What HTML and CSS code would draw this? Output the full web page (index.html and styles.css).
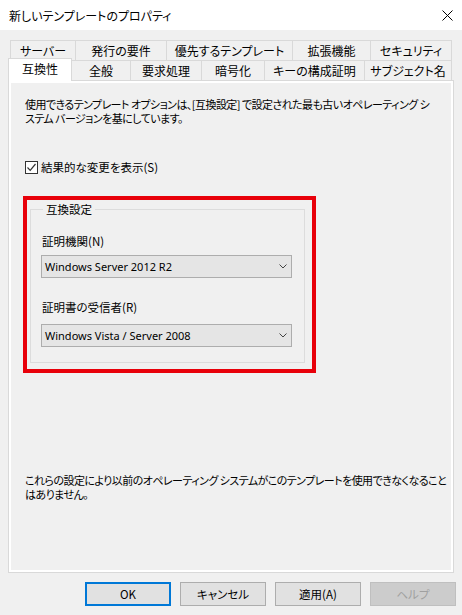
FILE: index.html
```html
<!DOCTYPE html>
<html lang="ja">
<head>
    <meta charset="UTF-8">
    <meta name="viewport" content="width=device-width, initial-scale=1.0">
    <title>新しいテンプレートのプロパティ</title>
    <link rel="stylesheet" href="styles.css">
</head>
<body>
    <div class="titlebar">
        <span class="title">新しいテンプレートのプロパティ</span>
        <svg class="close" width="11" height="11" viewBox="0 0 11 11">
            <path d="M0.5 0.5 L10.5 10.5 M10.5 0.5 L0.5 10.5" />
        </svg>
    </div>

    <div class="tabs">
        <div class="tab-row top">
            <div class="tab">サーバー</div>
            <div class="tab">発行の要件</div>
            <div class="tab">優先するテンプレート</div>
            <div class="tab">拡張機能</div>
            <div class="tab">セキュリティ</div>
        </div>
        <div class="tab-row bottom">
            <div class="tab selected">互換性</div>
            <div class="tab">全般</div>
            <div class="tab">要求処理</div>
            <div class="tab">暗号化</div>
            <div class="tab">キーの構成証明</div>
            <div class="tab">サブジェクト名</div>
        </div>
    </div>

    <div class="panel">
        <div class="page">
            <p class="intro">使用できるテンプレート オプションは、[互換設定] で設定された最も古いオペレーティング シ<br>ステム バージョンを基にしています。</p>

            <label class="check">
                <span class="box">
                    <svg width="11" height="11" viewBox="0 0 11 11">
                        <path d="M1.5 5.5 L4.2 8.3 L9.5 2" />
                    </svg>
                </span>
                結果的な変更を表示(S)
            </label>

            <!-- 赤枠は注釈 -->
            <div class="highlight">
                <fieldset class="group">
                    <legend>互換設定</legend>
                    <div class="field-label">証明機関(N)</div>
                    <div class="combo">
                        <span>Windows Server 2012 R2</span>
                        <svg width="8" height="5" viewBox="0 0 8 5"><path d="M0.5 0.5 L4 4 L7.5 0.5" /></svg>
                    </div>
                    <div class="field-label second">証明書の受信者(R)</div>
                    <div class="combo">
                        <span>Windows Vista / Server 2008</span>
                        <svg width="8" height="5" viewBox="0 0 8 5"><path d="M0.5 0.5 L4 4 L7.5 0.5" /></svg>
                    </div>
                </fieldset>
            </div>

            <p class="note">これらの設定により以前のオペレーティング システムがこのテンプレートを使用できなくなること<br>はありません。</p>
        </div>
    </div>

    <div class="buttons">
        <button class="btn default">OK</button>
        <button class="btn">キャンセル</button>
        <button class="btn">適用(A)</button>
        <button class="btn" disabled>ヘルプ</button>
    </div>
</body>
</html>
```

FILE: styles.css
```css
body {
    margin: 0;
    width: 462px;
    height: 615px;
    background-color: #f0f0f0;
    color: #000;
    font-family: "Noto Sans CJK JP", sans-serif;
    font-size: 11.5px;
    font-feature-settings: "palt";
    overflow: hidden;
}

/* タイトルバー */
.titlebar {
    height: 30px;
    background-color: #fff;
    display: flex;
    align-items: center;
    justify-content: space-between;
    padding: 0 9px;
    box-sizing: border-box;
    font-size: 12px;
}
.close path {
    stroke: #000;
    stroke-width: 1;
    fill: none;
}

/* タブ */
.tabs {
    margin: 10px 10px 0;
    font-size: 12px;
}
.tab-row {
    display: flex;
    height: 20px;
    align-items: flex-end;
}
.tab {
    box-sizing: border-box;
    height: 20px;
    border: 1px solid #d9d9d9;
    border-left: none;
    border-bottom: none;
    background-color: #f0f0f0;
    display: flex;
    align-items: center;
    justify-content: center;
    white-space: nowrap;
    padding-bottom: 1px;
}
.tab:first-child {
    border-left: 1px solid #d9d9d9;
}
.top .tab:nth-child(1) { width: 66px; }
.top .tab:nth-child(2) { width: 91px; }
.top .tab:nth-child(3) { width: 126px; }
.top .tab:nth-child(4) { width: 78px; }
.top .tab:nth-child(5) { width: 81px; }
.bottom .tab:nth-child(2) { width: 59px; }
.bottom .tab:nth-child(3) { width: 71px; }
.bottom .tab:nth-child(4) { width: 63px; }
.bottom .tab:nth-child(5) { width: 100px; }
.bottom .tab:nth-child(6) { width: 87px; }
.tab.selected {
    width: 64px;
    height: 23px;
    margin-left: -2px;
    margin-bottom: -1px;
    background-color: #fff;
    position: relative;
    z-index: 1;
    padding-bottom: 4px;
}

/* タブページ */
.panel {
    margin: 0 8px;
    height: 493px;
    box-sizing: border-box;
    border: 1px solid #d9d9d9;
    background-color: #fff;
    padding: 2px;
}
.page {
    height: 100%;
    background-color: #f0f0f0;
    padding-left: 14px;
    display: flex;
    flex-direction: column;
    align-items: flex-start;
    line-height: 13px;
}
.intro,
.note {
    font-size: 11px;
    line-height: 14px;
    letter-spacing: -0.55px;
    white-space: nowrap;
}
.intro {
    margin: 14px 0 0;
}
.check {
    display: flex;
    align-items: center;
    margin-top: 35px;
    height: 14px;
    gap: 3px;
}
.box {
    width: 13px;
    height: 13px;
    box-sizing: border-box;
    border: 1px solid #333;
    background-color: #fff;
    display: flex;
    align-items: center;
    justify-content: center;
}
.box path {
    stroke: #333;
    stroke-width: 1.2;
    fill: none;
}

.highlight {
    margin: 22px 0 0 -2px;
    width: 293px;
    height: 177px;
    box-sizing: border-box;
    border: 4px solid #e8000a;
    padding: 3px 7px 0 3px;
}
.group {
    margin: 0;
    border: 1px solid #dcdcdc;
    padding: 0 12px 15px 10px;
    height: 160px;
    box-sizing: border-box;
}
.group legend {
    padding: 0 3px;
    margin-left: 2px;
    line-height: 13px;
}
.field-label {
    margin: 19px 0 0 1px;
}
.field-label.second {
    margin-top: 23px;
}
.combo {
    margin-top: 7px;
    height: 23px;
    box-sizing: border-box;
    border: 1px solid #adadad;
    background-color: #e5e5e5;
    display: flex;
    align-items: center;
    justify-content: space-between;
    padding: 0 4px 0 3px;
    font-family: "Noto Sans", sans-serif;
    font-size: 11px;
}
.combo + .field-label + .combo {
    margin-top: 10px;
}
.combo path {
    stroke: #444;
    stroke-width: 1;
    fill: none;
}
.note {
    margin: 100px 0 0;
}

/* ボタン */
.buttons {
    display: flex;
    justify-content: flex-end;
    gap: 9px;
    padding-right: 6px;
    margin-top: 9px;
}
.btn {
    width: 86px;
    height: 24px;
    box-sizing: border-box;
    border: 1px solid #adadad;
    background-color: #e1e1e1;
    font-family: "Noto Sans CJK JP", sans-serif;
    font-size: 11.5px;
    font-feature-settings: "palt";
    color: #000;
    padding: 0;
}
.btn.default {
    border: 2px solid #0078d7;
}
.btn:disabled {
    background-color: #cccccc;
    border-color: #bfbfbf;
    color: #a0a0a0;
}
```
